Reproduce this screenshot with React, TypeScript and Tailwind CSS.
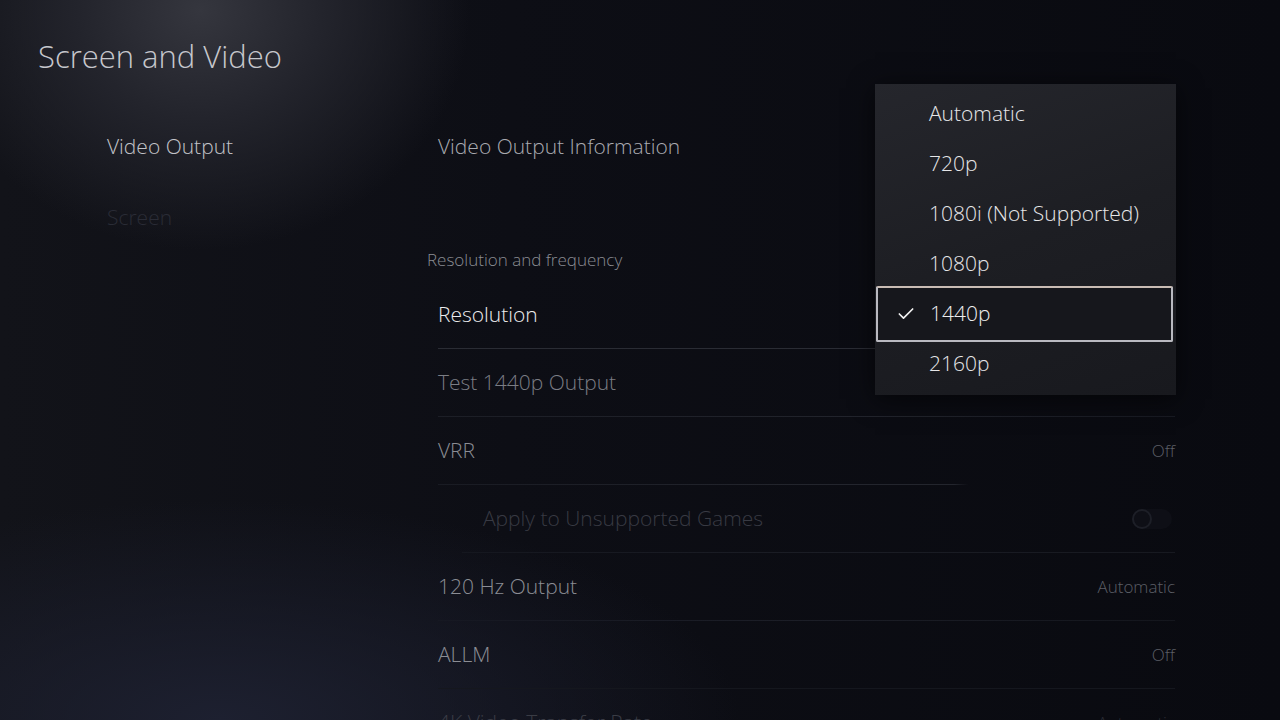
import React from "react";
import { Check } from "lucide-react";

const font = { fontFamily: '"Open Sans", "Noto Sans", sans-serif' };

function Row({
  label,
  value,
  labelClass,
  valueClass = "text-[#5c5e66]",
  line = "bg-[#23252d]",
  indent = false,
  extra,
}: {
  label: string;
  value?: string;
  labelClass: string;
  valueClass?: string;
  line?: string;
  indent?: boolean;
  extra?: React.ReactNode;
}) {
  return (
    <div className="flex flex-col h-[68px] pl-[11px]">
      <div className={`flex flex-1 items-center justify-between ${indent ? "pl-[45px]" : ""}`}>
        <span className={`text-[21px] font-light ${labelClass}`}>{label}</span>
        {value && <span className={`text-[17px] font-light ${valueClass}`}>{value}</span>}
        {extra}
      </div>
      <div className={`h-px ${line}`} />
    </div>
  );
}

export default function App() {
  const items = ["Automatic", "720p", "1080i (Not Supported)", "1080p", "1440p", "2160p"];
  return (
    <div
      style={font}
      className="relative w-[1280px] h-[720px] overflow-hidden bg-[radial-gradient(ellipse_270px_240px_at_200px_10px,#35363e_0%,#23242c_45%,rgba(20,21,28,0)_100%),radial-gradient(ellipse_520px_220px_at_220px_720px,#1d2030_0%,rgba(20,22,32,0)_100%),linear-gradient(90deg,#121319_0%,#0d0e15_40%,#090a10_100%)]"
    >
      <div className="flex flex-col">
        <div className="pl-[38px] pt-[36px] h-[113px]">
          <h1 className="text-[31px] leading-[40px] font-light text-[#c6c7cc]">Screen and Video</h1>
        </div>
        <div className="flex">
          <nav className="w-[427px] pl-[107px] flex flex-col">
            <div className="h-[67px] flex items-center text-[21px] font-light text-[#c2c3c8]">Video Output</div>
            <div className="h-[76px] flex items-center text-[21px] font-light text-[#2a2c36]">Screen</div>
          </nav>
          <main className="w-[748px] flex flex-col">
            <div className="h-[67px] flex items-center pl-[11px]">
              <span className="text-[21px] font-light text-[#a9aab0]">Video Output Information</span>
            </div>
            <div className="h-[68px]" />
            <div className="h-[24px] flex items-center text-[17px] font-light text-[#8a8c93]">
              Resolution and frequency
            </div>
            <div className="h-[9px]" />
            <Row label="Resolution" labelClass="text-[#ececee]" line="bg-[#2a2c34]" />
            <Row
              label="Test 1440p Output"
              labelClass="text-[#7b7d84]"
              line="bg-[linear-gradient(90deg,#1c1e26,#22242c_60%,#181a22)]"
            />
            <Row
              label="VRR"
              value="Off"
              labelClass="text-[#8b8d94]"
              line="bg-[linear-gradient(90deg,#191b23_0%,#23252d_50%,#23252d_70%,rgba(30,32,40,0)_72%)]"
            />
            <Row
              label="Apply to Unsupported Games"
              labelClass="text-[#383a43]"
              indent
              line="ml-[24px] bg-[linear-gradient(90deg,#15171f,#1b1d25_50%,#171920)]"
              extra={
                <div className="flex items-center pr-[3px]">
                  <div className="flex items-center w-[40px] h-[20px] rounded-full bg-[#0e0f16]">
                    <div className="w-[20px] h-[20px] rounded-full border-2 border-[#1d1f27]" />
                  </div>
                </div>
              }
            />
            <Row
              label="120 Hz Output"
              value="Automatic"
              labelClass="text-[#8b8d94]"
              line="bg-[linear-gradient(90deg,#161822,#1c1e27_50%,#14161d)]"
            />
            <Row label="ALLM" value="Off" labelClass="text-[#8b8d94]" line="bg-[#15171e]" />
            <Row
              label="4K Video Transfer Rate"
              value="Automatic"
              labelClass="text-[#3a3c45]"
              valueClass="text-[#2c2e36]"
            />
          </main>
        </div>
      </div>

      <div className="absolute left-[875px] top-[84px] w-[301px] h-[311px] pt-[5px] flex flex-col bg-[linear-gradient(160deg,#25262c_0%,#1d1e23_50%,#18191e_100%)] shadow-[0_4px_24px_rgba(0,0,0,0.6)]">
        {items.map((it) =>
          it === "1440p" ? (
            <div
              key={it}
              className="relative h-[56px] -my-[3px] ml-[1px] mr-[3px] flex items-center border-2 border-[#b9b9c0] rounded-[2px] bg-[#16171c] border-t-[#c9bcb4]"
            >
              <Check className="absolute left-[18px] w-[20px] h-[20px] text-[#f2f2f2]" strokeWidth={2} />
              <span className="pl-[52px] text-[21px] font-light text-[#eeeeef]">{it}</span>
            </div>
          ) : (
            <div key={it} className="h-[50px] flex items-center pl-[54px] text-[21px] font-light text-[#e6e6e8]">
              {it}
            </div>
          )
        )}
      </div>
    </div>
  );
}
